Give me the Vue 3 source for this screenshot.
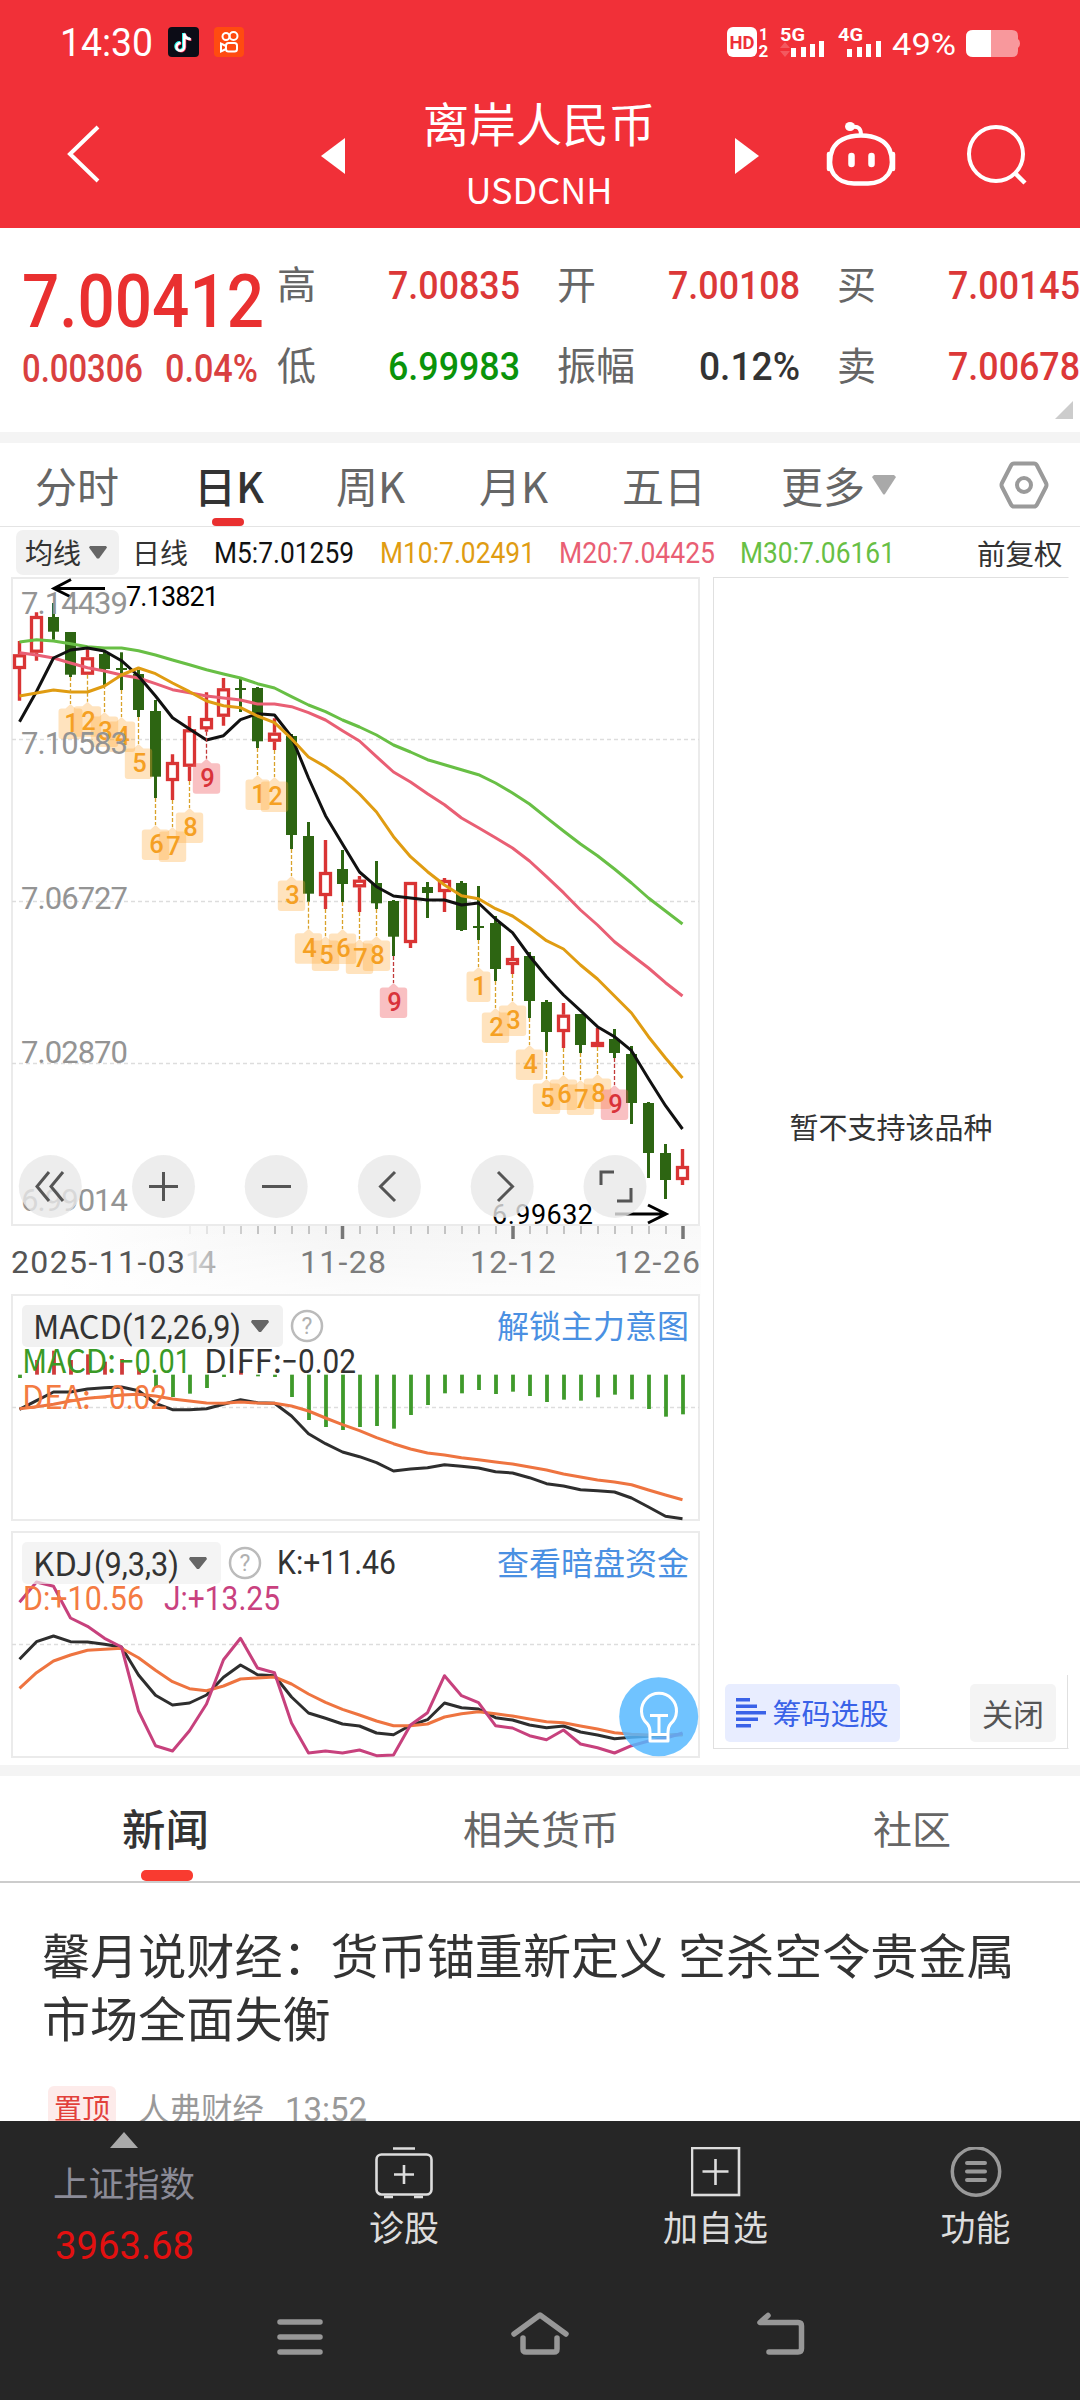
<script setup>
import { h } from 'vue'

// Single line of numerals fitted to a fixed advance width, centred on its cap height
const Fit = (p) => {
  const height = Math.round(p.s * 0.8)
  return h('svg', { width: p.w, height, style: { overflow: 'visible', display: 'block', flex: 'none' } }, [
    h('text', {
      x: 0, y: height / 2 + p.s * 0.356, 'font-size': p.s, 'font-weight': p.b || 400,
      fill: 'currentColor', textLength: p.w, lengthAdjust: 'spacingAndGlyphs'
    }, p.t)
  ])
}
Fit.props = ['t', 'w', 's', 'b']

const quotes = [
  { k: '高', v: '7.00835', w: 132, c: 'red' },
  { k: '开', v: '7.00108', w: 132, c: 'red' },
  { k: '买', v: '7.00145', w: 132, c: 'red' },
  { k: '低', v: '6.99983', w: 132, c: 'green' },
  { k: '振幅', v: '0.12%', w: 101, c: 'dark' },
  { k: '卖', v: '7.00678', w: 132, c: 'red' }
]
const periods = ['分时', '日K', '周K', '月K', '五日', '更多']

const X = (i) => 19.5 + 17 * i
const line = (ys, f = (v) => v) => ys.map((y, i) => `${X(i)},${f(y).toFixed(1)}`).join(' ')

// direction, high, body top, body bottom, low
const candles = [
  ['r', 641, 654.3, 669, 700.7], ['r', 612.3, 616, 652.7, 660.7], ['g', 603, 617, 631.7, 639.7],
  ['g', 632, 632, 674.7, 677], ['r', 649.3, 657.3, 674.7, 674.7], ['g', 651.7, 654, 669, 685],
  ['g', 652.3, 668, 670, 690], ['g', 670, 674, 710, 717], ['g', 700, 711, 776.7, 798],
  ['r', 754.3, 762, 781, 800], ['r', 716, 729.3, 766.7, 781], ['r', 692.3, 718, 729.3, 731.7],
  ['r', 678, 688.3, 716.7, 725.7], ['g', 678.3, 688, 690, 712], ['g', 687, 688, 741.3, 748],
  ['r', 718.3, 732.7, 741.7, 750], ['g', 734, 736, 835, 849], ['g', 822, 836, 893.7, 901.7],
  ['r', 840, 872, 896, 909], ['g', 850, 869, 884, 902], ['r', 876, 879.7, 887.3, 912],
  ['g', 861, 883, 903.3, 909], ['g', 900, 901, 936.7, 956], ['r', 882, 882, 943, 948],
  ['g', 882, 887, 893, 918], ['r', 878, 880, 892, 912], ['g', 881, 883, 930, 931],
  ['g', 886, 926, 928, 940], ['g', 916, 923, 969, 981], ['r', 946, 958, 965, 974],
  ['g', 952, 956, 1001, 1018], ['g', 1000, 1002, 1032, 1052], ['r', 1003, 1014.7, 1032, 1048],
  ['g', 1014, 1014, 1045, 1053], ['r', 1028, 1042, 1047, 1047], ['g', 1029, 1039, 1053, 1058],
  ['g', 1046, 1054, 1103, 1124], ['g', 1102, 1103, 1153, 1178], ['g', 1144, 1153, 1180, 1199],
  ['r', 1149, 1166, 1180, 1185]
]
const ma5 = [721.7, 691.5, 658, 650, 648, 651, 660.7, 676, 696, 717.7, 729, 740, 735.7, 719.7, 713.7, 715, 736.7, 778, 815.7, 844, 872, 886.7, 896, 898, 900, 900, 905, 903, 919, 932.7, 956, 976.7, 995, 1010.7, 1026.7, 1036.7, 1050.7, 1078.7, 1105.7, 1129]
const ma10 = [696, 693, 690, 692, 692, 686, 675, 668, 673.7, 683, 691.7, 701, 705.7, 707.7, 716, 722.7, 738.7, 757, 766.7, 778.7, 794, 812, 836.7, 856.7, 871.7, 885, 895.7, 898.7, 908.7, 916, 927.7, 940.7, 949, 965, 979, 996, 1013, 1036.7, 1058, 1078]
const ma20 = [652.7, 655, 658, 663, 667.7, 671, 675, 678, 683.7, 689.7, 692.7, 696, 698, 700, 704, 704, 706.7, 712.7, 720, 730.7, 741, 756.7, 772, 782, 793.7, 804.7, 818, 827.7, 837.7, 848, 861, 876.7, 892.7, 910, 925, 941.7, 955, 968, 982.7, 996]
const ma30 = [642, 639.7, 641, 643.7, 646.7, 648, 648, 650.7, 655, 660, 664.7, 669.7, 674, 678, 683.7, 688, 696.7, 705, 711.7, 720, 727, 735, 745, 752, 759.7, 764.7, 769.7, 774.7, 783, 793, 804, 817.7, 831, 844, 855.7, 869, 883, 898, 911, 924]

const nine = (from, to, start) => {
  const out = []
  for (let i = from; i <= to; i++) out.push({ n: start + i - from, x: X(i), y: candles[i][4] })
  return out
}
const badges = [...nine(3, 11, 1), ...nine(14, 22, 1), ...nine(27, 35, 1)]
const badgePath = (b) => {
  const w = b.n === 1 ? 12 : 13.7
  const t = b.y + 31.5
  return `M${b.x} ${b.y + 27}L${b.x + 5} ${t}H${b.x + w - 3}q3 0 3 3V${b.y + 59}q0 3-3 3H${b.x - w + 3}q-3 0-3-3V${t + 3}q0-3 3-3H${b.x - 5}Z`
}

const yLabels = [['7.14439', 614], ['7.10583', 754], ['7.06727', 908.5], ['7.02870', 1063], ['6.99014', 1211]]
const ticks = Array.from({ length: 30 }, (_, k) => k + 10).filter((i) => i % 10 !== 9)

// Sub-charts are plotted in thirds of a pixel from their panel origin
const mY = (v) => 1290 + v / 3
const kY = (v) => 1525 + v / 3
const hist = [264, 210, 182, 210, 193, 215, 207, 237, 292, 321, 311, 294, 261, 241, 259, 261, 321, 390, 411, 420, 411, 408, 416, 375, 345, 310, 310, 300, 312, 305, 318, 336, 329, 332, 322, 314, 328, 357, 380, 373]
const diff = [358, 332, 306, 306, 297, 293, 291, 302, 340, 359, 359, 356, 343, 329, 338, 340, 378, 431, 461, 486, 500, 518, 543, 537, 533, 524, 529, 534, 545, 549, 563, 581, 588, 599, 602, 606, 624, 651, 679, 686]
const dea = [356, 350, 343, 333, 325, 320, 315, 313, 318, 327, 333, 339, 340, 336, 339, 340, 348, 363, 384, 404, 422, 443, 461, 477, 489, 495, 503, 509, 516, 522, 531, 540, 552, 561, 570, 576, 584, 600, 615, 629]
const kk = [403, 350, 333, 350, 351, 358, 366, 450, 511, 540, 534, 510, 457, 420, 449, 452, 516, 564, 580, 597, 603, 624, 629, 601, 584, 534, 548, 552, 578, 585, 600, 608, 603, 621, 630, 641, 637, 634, 632, 628]
const dd = [490, 443, 408, 390, 376, 373, 370, 398, 436, 470, 491, 497, 483, 462, 459, 456, 477, 507, 532, 553, 570, 588, 602, 602, 597, 576, 566, 560, 566, 573, 582, 590, 593, 603, 612, 623, 628, 630, 630, 630]
const jj = [232, 171, 184, 279, 304, 340, 366, 558, 662, 678, 617, 537, 404, 340, 429, 443, 594, 684, 678, 684, 675, 692, 690, 600, 563, 452, 512, 533, 602, 609, 632, 644, 615, 657, 668, 684, 662, 648, 640, 624]

const tools = [
  { x: 50.3, d: 'M49 1172l-12 14.5 12 14.5M63 1172l-12 14.5 12 14.5' },
  { x: 163.5, d: 'M149 1186.5h29M163.5 1172v29' },
  { x: 276.2, d: 'M262 1186.5h29' },
  { x: 389.4, d: 'M395 1172l-14.5 14.5 14.5 14.5' },
  { x: 502.2, d: 'M498 1172l14.5 14.5-14.5 14.5' },
  { x: 615, d: 'M614 1172h-13v13M631 1188v13h-14' }
]
</script>

<template>
  <div class="page">
    <header class="top">
      <div class="status">
        <Fit class="clock" t="14:30" :w="93" :s="39" />
        <svg class="app1" width="31" height="30" viewBox="0 0 31 30">
          <rect width="31" height="30" rx="4" fill="#0c0c16" />
          <path d="M15.5 6v13.5a3.900 3.900 0 1 1-3.600-4M15.500 6c.5 3.500 3 5.500 6.500 5.700" fill="none" stroke="#25f4ee" stroke-width="3" />
          <path d="M17 7v13.500a3.900 3.900 0 1 1-3.600-4M17 7c.5 3.500 3 5.500 6.500 5.700" fill="none" stroke="#fe2c55" stroke-width="2.500" />
          <path d="M16.300 6.500v13.500a3.900 3.900 0 1 1-3.600-4M16.300 6.500c.5 3.500 3 5.500 6.500 5.700" fill="none" stroke="#fff" stroke-width="2.500" />
        </svg>
        <svg class="app2" width="30" height="30" viewBox="0 0 30 30">
          <rect width="30" height="30" rx="4" fill="#ff4b10" />
          <g fill="none" stroke="#fff" stroke-width="2">
            <circle cx="12" cy="9.500" r="3.500" /><circle cx="19.500" cy="9" r="4" />
            <rect x="12" y="16" width="11" height="8.500" rx="2.500" /><path d="M12 19l-5-2.500v8l5-2.500" />
          </g>
        </svg>
        <svg class="signals" width="296" height="44" viewBox="724 20 296 44" font-weight="700" fill="#fff">
          <rect x="727" y="27" width="30" height="30" rx="6" />
          <text x="729.500" y="49" font-size="19" textLength="25" lengthAdjust="spacingAndGlyphs" fill="#ee3038">HD</text>
          <text x="759" y="39.500" font-size="16">1</text><text x="758.500" y="57" font-size="17">2</text>
          <text x="780" y="41" font-size="19" textLength="25" lengthAdjust="spacingAndGlyphs">5G</text>
          <path d="M780 48l5-6 5 6zM780 51h10l-5 6z" opacity=".2" />
          <path d="M791 48h5v9h-5zM801 47h5v10h-5zM810 44h5v13h-5zM819 41h5v16h-5zM847 49h5v8h-5zM857 47h5v10h-5zM866 44h5v13h-5zM876 41h5v16h-5z" />
          <text x="838" y="41" font-size="19" textLength="25" lengthAdjust="spacingAndGlyphs">4G</text>
          <text x="892" y="54.500" font-size="32" font-weight="400" textLength="64" lengthAdjust="spacingAndGlyphs">49%</text>
          <path d="M973 30h39q6 0 6 6v3q2 1 2 4.500t-2 4.500v3q0 6-6 6h-39q-7 0-7-7V37q0-7 7-7z" opacity=".5" />
          <path d="M973 30h18v27h-18q-7 0-7-7V37q0-7 7-7z" />
        </svg>
      </div>
      <div class="titlebar">
        <svg class="back" width="36" height="60" viewBox="0 0 36 60"><path d="M33 3L5 30l28 27" fill="none" stroke="#fff" stroke-width="4" /></svg>
        <svg class="prev" width="24" height="36" viewBox="0 0 24 36"><path d="M24 0v36L0 18z" fill="#fff" /></svg>
        <div class="name">
          <h1>离岸人民币</h1>
          <span>USDCNH</span>
        </div>
        <svg class="next" width="24" height="36" viewBox="0 0 24 36"><path d="M0 0v36l24-18z" fill="#fff" /></svg>
        <svg class="robot" width="70" height="66" viewBox="0 0 70 66">
          <path d="M35 14.500c15 0 25 6 28.500 14 3.500 8 3.500 18-1.500 25C57 60 50 62.500 42 62.500H28c-8 0-15-2.500-20-9-5-7-5-17-1.500-25C10 20.500 20 14.500 35 14.500z" fill="none" stroke="#fff" stroke-width="4.500" />
          <path d="M3 33v15M67 33v15" stroke="#fff" stroke-width="4.500" stroke-linecap="round" />
          <path d="M35 14c0-6-2-9-9-8" fill="none" stroke="#fff" stroke-width="4" />
          <ellipse cx="24" cy="5.500" rx="5" ry="4.500" fill="#fff" />
          <path d="M25.500 35v8M45.500 35v8" stroke="#fff" stroke-width="6.500" stroke-linecap="round" />
        </svg>
        <svg class="search" width="62" height="62" viewBox="0 0 62 62"><circle cx="30" cy="30" r="27" fill="none" stroke="#fff" stroke-width="4" /><path d="M49 49l10 10" stroke="#fff" stroke-width="4.500" /></svg>
      </div>
    </header>

    <section class="quote">
      <div class="last">
        <Fit t="7.00412" :w="242" :s="75" :b="500" />
        <div class="chg"><Fit t="0.00306" :w="121" :s="38" :b="500" /><Fit t="0.04%" :w="93" :s="38" :b="500" /></div>
      </div>
      <div class="cells">
        <div v-for="q in quotes" :key="q.k" class="cell">
          <span>{{ q.k }}</span>
          <Fit :class="q.c" :t="q.v" :w="q.w" :s="39.500" :b="500" />
        </div>
      </div>
      <svg class="corner" width="18" height="18"><path d="M18 0v18H0z" fill="#ccc" /></svg>
    </section>
    <div class="strip"></div>

    <nav class="periods">
      <div v-for="(p, i) in periods" :key="p" :class="{ on: i === 1 }">
        {{ p }}<svg v-if="i === 5" width="24" height="20"><path d="M2 0h20l2 2-11 17q-1 1-2 0L0 2z" fill="#a9a9a9" /></svg>
      </div>
      <svg width="50" height="48" viewBox="0 0 50 48"><path d="M15 2.500h20q2 0 3 2l9 17.500q1 2 0 4L38 43.500q-1 2-3 2H15q-2 0-3-2L3 26q-1-2 0-4L12 4.500q1-2 3-2z" fill="none" stroke="#9a9a9a" stroke-width="4" /><circle cx="25" cy="24" r="7" fill="none" stroke="#9a9a9a" stroke-width="4" /></svg>
    </nav>

    <div class="averages">
      <div class="pill">均线<svg width="18" height="13"><path d="M1 0h16l1 1.500-8 11h-2L0 1.500z" fill="#666" /></svg></div>
      <span class="kind">日线</span>
      <Fit class="m5" t="M5:7.01259" :w="140" :s="29.500" />
      <Fit class="m10" t="M10:7.02491" :w="155" :s="29.500" />
      <Fit class="m20" t="M20:7.04425" :w="156" :s="29.500" />
      <Fit class="m30" t="M30:7.06161" :w="155" :s="29.500" />
      <span class="adj">前复权</span>
    </div>

    <main class="board">
      <svg class="chart" width="706" height="1188" viewBox="0 577 706 1188">
        <defs>
          <linearGradient id="fade"><stop offset="0" stop-color="#f2f2f2" stop-opacity="0" /><stop offset=".45" stop-color="#f4f4f4" /><stop offset="1" stop-color="#f9f9f9" /></linearGradient>
          <linearGradient id="down" x2="0" y2="1"><stop offset="0" stop-color="#fff" stop-opacity="0" /><stop offset="1" stop-color="#fff" stop-opacity=".75" /></linearGradient>
          <linearGradient id="ghost"><stop offset="0" stop-color="#e8e8e8" /><stop offset="1" stop-color="#aaa" /></linearGradient>
        </defs>
        <rect x="60" y="1226" width="641" height="70" fill="url(#fade)" /><rect x="12" y="1226" width="689" height="70" fill="url(#down)" />
        <rect x="12" y="1297" width="687" height="223" fill="#fff" />
        <g fill="none" stroke="#ebebeb" stroke-width="2">
          <rect x="12" y="578" width="687" height="647" /><rect x="12" y="1295" width="687" height="225" /><rect x="12" y="1532" width="687" height="225" />
        </g>
        <path d="M12 739.500H699M12 901.500H699M12 1063.500H699M12 1407.500H699M12 1644.500H699" stroke="#ddd" stroke-width="1.300" stroke-dasharray="4 3" />

        <!-- price -->
        <g v-for="(c, i) in candles" :key="i" :stroke="c[0] === 'r' ? '#d93434' : '#2d6512'">
          <template v-if="c[0] === 'g'">
            <path :d="`M${X(i)} ${c[1]}V${c[4]}`" stroke-width="3" />
            <rect :x="X(i) - 5.500" :y="c[2]" width="11" :height="c[3] - c[2]" fill="#2d6512" stroke="none" />
          </template>
          <template v-else>
            <path :d="`M${X(i)} ${c[1]}V${c[2]}M${X(i)} ${c[3]}V${c[4]}`" stroke-width="3.400" />
            <rect :x="X(i) - 5" :y="c[2] + 1.500" width="10" :height="c[3] - c[2] - 3" fill="#fff" stroke-width="3.300" />
          </template>
        </g>
        <g fill="none" stroke-width="3" stroke-linejoin="round">
          <polyline :points="line(ma30)" stroke="#68bf45" />
          <polyline :points="line(ma20)" stroke="#e95f74" />
          <polyline :points="line(ma5)" stroke="#111" />
          <polyline :points="line(ma10)" stroke="#e09c12" />
        </g>
        <g v-for="(b, i) in badges" :key="'b' + i">
          <path :d="`M${b.x} ${b.y}V${b.y + 27}`" :stroke="b.n === 9 ? '#c23a3a' : '#d9a22a'" stroke-width="1.300" stroke-dasharray="4 2" />
          <path :d="badgePath(b)" :fill="b.n === 9 ? '#ee5a5f' : '#ffa834'" :opacity="b.n === 9 ? 0.38 : 0.32" />
        </g>
        <text v-for="(b, i) in badges" :key="'n' + i" :x="b.x + 1" :y="b.y + 55" class="din mid" font-size="25.500" font-weight="500" :fill="b.n === 9 ? '#d9333a' : '#f5a023'">{{ b.n }}</text>
        <path d="M105 588.500H54M71 579.500L54 588.500l17 8.500" fill="none" stroke="#000" stroke-width="3" />
        <text class="din" v-for="l in yLabels" :key="l[0]" x="21" :y="l[1]" font-size="31" font-weight="400" textLength="107" fill="#949494">{{ l[0] }}</text>
        <text class="din" x="126" y="605.500" font-size="27" textLength="93" fill="#000">7.13821</text>
        <text class="din" x="492" y="1224" font-size="27" textLength="101" fill="#000">6.99632</text>
        <path d="M615 1214H665M648 1205l18 9-18 9" fill="none" stroke="#000" stroke-width="3" />
        <g v-for="t in tools" :key="t.x">
          <circle :cx="t.x" cy="1186.500" r="31.500" fill="#e8e8e8" opacity=".8" />
          <path :d="t.d" fill="none" stroke="#555" stroke-width="3" />
        </g>

        <!-- dates -->
        <path v-for="i in ticks" :key="'t' + i" :d="`M${X(i) + 0.500} 1226v8`" stroke="#c4c4c4" stroke-width="2" :opacity="Math.min(1, (i - 9) / 5)" />
        <path d="M342.500 1226v13M513 1226v13M683 1226v13" stroke="#777" stroke-width="3.500" />
        <g class="din" font-size="32" fill="#7c7c7c">
          <text x="11" y="1273" textLength="174" fill="#555">2025-11-03</text>
          <text x="185" y="1273" textLength="31" fill="url(#ghost)">14</text>
          <text x="300" y="1273" textLength="86">11-28</text>
          <text x="470" y="1273" textLength="86">12-12</text>
          <text x="614" y="1273" textLength="86">12-26</text>
        </g>

        <!-- MACD and KDJ -->
        <path v-for="(v, i) in hist" :key="'m' + i" :d="`M${X(i) + 0.500} ${mY(254)}V${mY(v)}`" :stroke="v < 254 ? '#cf3a3a' : '#3f9a2b'" stroke-width="3.800" />
        <g fill="none" stroke-width="3" stroke-linejoin="round">
          <polyline :points="line(diff, mY)" stroke="#2e2e2e" /><polyline :points="line(dea, mY)" stroke="#ee7440" />
          <polyline :points="line(kk, kY)" stroke="#2e2e2e" /><polyline :points="line(dd, kY)" stroke="#ee7440" /><polyline :points="line(jj, kY)" stroke="#c7417d" />
        </g>
        <rect x="22" y="1305" width="261" height="42" rx="5" fill="#f1f1f1" />
        <rect x="22" y="1542" width="199" height="42" rx="5" fill="#efefef" opacity=".7" />
        <path d="M252 1320h16l1 2-8 10h-2l-8-10zM190 1557h16l1 2-8 10h-2l-8-10z" fill="#666" />
        <g fill="none" stroke="#bbb" stroke-width="2.500"><circle cx="307" cy="1326" r="15" /><circle cx="245" cy="1563" r="15" /></g>
        <g class="din mid" font-size="23" fill="#b0b0b0"><text x="307" y="1334">?</text><text x="245" y="1571">?</text></g>
        <g class="cjk" font-size="33" fill="#333">
          <text x="33" y="1339" textLength="89" lengthAdjust="spacingAndGlyphs">MACD</text>
          <text class="din" x="122" y="1339" textLength="119" lengthAdjust="spacingAndGlyphs">(12,26,9)</text>
          <text x="33" y="1576" textLength="60" lengthAdjust="spacingAndGlyphs">KDJ</text>
          <text class="din" x="94" y="1576" textLength="85" lengthAdjust="spacingAndGlyphs">(9,3,3)</text>
          <text x="22" y="1373" textLength="94" lengthAdjust="spacingAndGlyphs" fill="#3a9a26">MACD:</text>
          <text class="din" x="118" y="1373" textLength="73" lengthAdjust="spacingAndGlyphs" fill="#3a9a26">−0.01</text>
          <text x="204" y="1373" textLength="78" lengthAdjust="spacingAndGlyphs">DIFF:</text>
          <text class="din" x="281" y="1373" textLength="75" lengthAdjust="spacingAndGlyphs">−0.02</text>
          <text x="22" y="1409" textLength="69" lengthAdjust="spacingAndGlyphs" fill="#f47b42">DEA:</text>
          <text class="din" x="92" y="1409" textLength="75" lengthAdjust="spacingAndGlyphs" fill="#f47b42">−0.02</text>
          <text class="din" x="277" y="1574" textLength="119" lengthAdjust="spacingAndGlyphs">K:+11.46</text>
          <text class="din" x="23" y="1610" textLength="121" lengthAdjust="spacingAndGlyphs" fill="#f47b42">D:+10.56</text>
          <text class="din" x="164" y="1610" textLength="116" lengthAdjust="spacingAndGlyphs" fill="#c9417f">J:+13.25</text>
        </g>
        <g class="cjk" font-size="32" fill="#4a90e2"><text x="497" y="1338">解锁主力意图</text><text x="497" y="1575">查看暗盘资金</text></g>
        <circle cx="658.700" cy="1716.700" r="39.500" fill="#55b8ff" opacity=".84" />
        <path d="M650 1741v-9q0-5-2.500-8a17.500 17.500 0 1 1 23 0q-2.500 3-2.500 8v9zM650 1734.500h18M650 1715.500h18M659 1715.500v19" fill="none" stroke="#fff" stroke-width="3" stroke-linejoin="round" />
      </svg>

      <aside class="side">
        <p>暂不支持该品种</p>
        <div class="actions">
          <div class="pick"><svg width="30" height="30"><path d="M0 0h14v3.500H0zM0 6.500h21v3.500H0zM0 13h30v3.500H0zM0 19.500h22v3.500H0zM0 26h15v3.500H0z" fill="#3a62e8" /></svg><span>筹码选股</span></div>
          <div class="close"><span>关闭</span></div>
        </div>
      </aside>
    </main>
    <div class="strip"></div>

    <nav class="feeds"><span class="on">新闻</span><span>相关货币</span><span>社区</span></nav>
    <article class="news">
      <h2>馨月说财经：货币锚重新定义 空杀空令贵金属市场全面失衡</h2>
      <div class="meta"><b>置顶</b><span>人弗财经</span><Fit t="13:52" :w="82" :s="34" /></div>
    </article>

    <footer>
      <div class="dock">
        <div class="index">
          <svg width="28" height="16"><path d="M14 0l14 16H0z" fill="#aaa" /></svg>
          <span>上证指数</span>
          <Fit t="3963.68" :w="139" :s="38" />
        </div>
        <div class="act a1">
          <svg width="58" height="52" viewBox="0 0 58 52"><g fill="none" stroke="#ddd" stroke-width="2.600"><rect x="1.500" y="7.500" width="55" height="40" rx="5" /><path d="M18 1.500h22M29 18v19M19 27.500h20M9 50h9M39 50h9" /></g></svg>诊股
        </div>
        <div class="act a2">
          <svg width="50" height="52" viewBox="0 0 50 52"><g fill="none" stroke="#ddd" stroke-width="2.600"><rect x="1" y="1" width="47" height="47" /><path d="M24.500 12v26M11.500 24.500h26" /></g></svg>加自选
        </div>
        <div class="act a3">
          <svg width="52" height="52" viewBox="0 0 52 52"><g fill="none" stroke="#999" stroke-width="3.500"><circle cx="26" cy="24.500" r="23.700" /><path d="M17 16h18M17 24.500h18M17 33h18" stroke-linecap="round" stroke-width="4" /></g></svg>功能
        </div>
      </div>
      <svg class="keys" width="1080" height="60" viewBox="0 2305 1080 60" fill="none" stroke="#979797" stroke-width="5.500" stroke-linecap="round" stroke-linejoin="round">
        <path d="M280 2322h40M280 2337h40M280 2352h40M514 2334l26-19 26 19M523 2338v11q0 3 3 3h28q3 0 3-3v-11" />
        <path d="M768 2315.500l-8 7h38q3.500 0 3.500 3.500v22.500q0 3.500-3.500 3.500h-29" />
      </svg>
    </footer>
  </div>
</template>

<style>
body { margin: 0; background: #fff; }
</style>

<style scoped>
.page { width: 1080px; height: 2400px; overflow: hidden; display: flex; flex-direction: column; background: #fff; font-family: Roboto, "Noto Sans CJK SC", sans-serif; color: #333; }
.page > * { flex: none; box-sizing: border-box; }
h1, h2, p { margin: 0; font-weight: 400; }
svg { flex: none; display: block; }
.top { height: 228px; background: #f13038; color: #fff; }
.status { height: 84px; display: flex; align-items: center; padding-left: 60px; }
.app1 { margin-left: 15px; }
.app2 { margin-left: 15px; }
.signals { margin-left: 480px; }
.titlebar { height: 140px; display: flex; align-items: center; }
.back { margin-left: 65px; }
.prev { margin: 3px 0 0 220px; }
.next { margin-top: 3px; }
.name { width: 240px; margin: 0 76px 0 74px; display: flex; flex-direction: column; align-items: center; font-family: "Noto Sans CJK SC", sans-serif; }
h1 { font-size: 46.500px; line-height: 60px; }
.name span { font-size: 36px; line-height: 56px; margin-top: 8px; }
.robot { margin-left: 67px; }
.search { margin: 2px 0 0 70px; }
.quote { height: 204px; display: flex; position: relative; }
.last { width: 255px; padding: 42px 0 0 22px; color: #e93030; }
.chg { display: flex; gap: 22px; margin-top: 23px; color: #d94040; }
.cells { display: grid; grid-template-columns: repeat(3, 243px); column-gap: 37px; grid-auto-rows: 81px; padding-top: 16px; }
.cell { display: flex; align-items: center; justify-content: space-between; font: 39px/50px "Noto Sans CJK SC", sans-serif; color: #666; }
.cell span { margin-bottom: 5px; }
.cell svg { font-family: Roboto, sans-serif; }
.red { color: #dc3838; }
.green { color: #0a930a; }
.dark { color: #333; }
.corner { position: absolute; right: 7px; bottom: 13px; }
.strip { height: 11px; background: #f4f4f4; }
.periods { height: 84px; border-bottom: 1px solid #e4e4e4; padding-left: 35px; display: grid; grid-template-columns: 159px 142px 143px 143px 159px 218px 50px; align-items: center; font: 42px/83px "Noto Sans CJK SC", sans-serif; color: #666; }
.periods div { display: flex; align-items: center; position: relative; gap: 7px; height: 83px; }
.periods .on { color: #333; font-weight: 500; }
.periods .on::after { content: ""; position: absolute; left: 18px; bottom: 0; width: 32px; height: 8px; border-radius: 4px; background: #e93030; }
.averages { height: 50px; display: flex; align-items: center; padding-left: 16px; font-size: 28px; }
.pill { width: 103px; height: 45px; box-sizing: border-box; padding-left: 9px; border-radius: 7px; background: #f1f1f1; display: flex; align-items: center; gap: 8px; }
.kind { margin-left: 13px; }
.m5 { margin-left: 26px; color: #111; }
.m10 { margin-left: 26px; color: #e09c12; }
.m20 { margin-left: 24px; color: #e95f74; }
.m30 { margin-left: 25px; color: #68bf45; }
.adj { margin-left: 82px; font-size: 28.500px; }
.board { height: 1188px; display: flex; }
.din { font-family: Roboto, sans-serif; }
.cjk { font-family: "Noto Sans CJK SC", sans-serif; }
.mid { text-anchor: middle; }
.side { width: 356px; height: 1172px; margin-left: 7px; box-sizing: border-box; border: 1px solid #e0e0e0; border-right-color: transparent; display: flex; flex-direction: column; font-family: "Noto Sans CJK SC", sans-serif; }
.side p { font-size: 29px; line-height: 40px; text-align: center; margin-top: 528px; }
.actions { margin-top: auto; height: 73px; border-right: 1px solid #e0e0e0; display: flex; justify-content: space-between; padding: 0 11px 0 11px; }
.actions div { height: 58px; margin-top: 9px; border-radius: 5px; display: flex; align-items: center; justify-content: center; }
.actions span { margin-bottom: 2px; }
.pick { width: 175px; background: #e8edff; color: #3a62e8; font-size: 29px; gap: 6px; }
.close { width: 86px; background: #f4f4f4; color: #555; font-size: 31px; }
.feeds { height: 107px; border-bottom: 2px solid #ccc; display: flex; font: 39px/105px "Noto Sans CJK SC", sans-serif; color: #666; padding: 0 129px 0 122px; justify-content: space-between; white-space: nowrap; }
.feeds span { height: 105px; line-height: 103px; }
.feeds .on { position: relative; font-size: 43.500px; font-weight: 500; color: #333; }
.feeds .on::after { content: ""; position: absolute; left: 19px; bottom: 0; width: 52px; height: 11px; border-radius: 5px; background: #f93b30; }
.news { height: 238px; padding: 39px 40px 0 42px; overflow: hidden; font-family: "Noto Sans CJK SC", sans-serif; }
h2 { font-size: 48.100px; line-height: 63px; }
.meta { display: flex; align-items: center; height: 46px; margin: 37px 0 0 6px; color: #999; font-size: 31.500px; }
.meta span { margin-bottom: 2px; }
.meta b { width: 68px; height: 44px; line-height: 42px; text-align: center; background: #fdebea; border-radius: 6px; color: #e2413b; font-size: 28px; font-weight: 400; margin-right: 22px; }
.meta svg { font-family: Roboto, sans-serif; margin-left: 21px; }
footer { height: 279px; background: #262626; color: #ddd; font-family: "Noto Sans CJK SC", sans-serif; }
.dock { height: 184px; display: flex; font-size: 35px; }
.index { width: 248px; display: flex; flex-direction: column; align-items: center; padding-top: 11px; }
.index span { color: #8b8b97; font-size: 35.500px; line-height: 50px; margin: 9px 0 23px; }
.index svg:last-child { color: #e31010; font-family: Roboto, sans-serif; }
.act { display: flex; flex-direction: column; align-items: center; padding-top: 26px; line-height: 50px; gap: 2px; }
.a1 { width: 312px; }
.a2 { width: 311px; }
.a3 { width: 209px; }
</style>
